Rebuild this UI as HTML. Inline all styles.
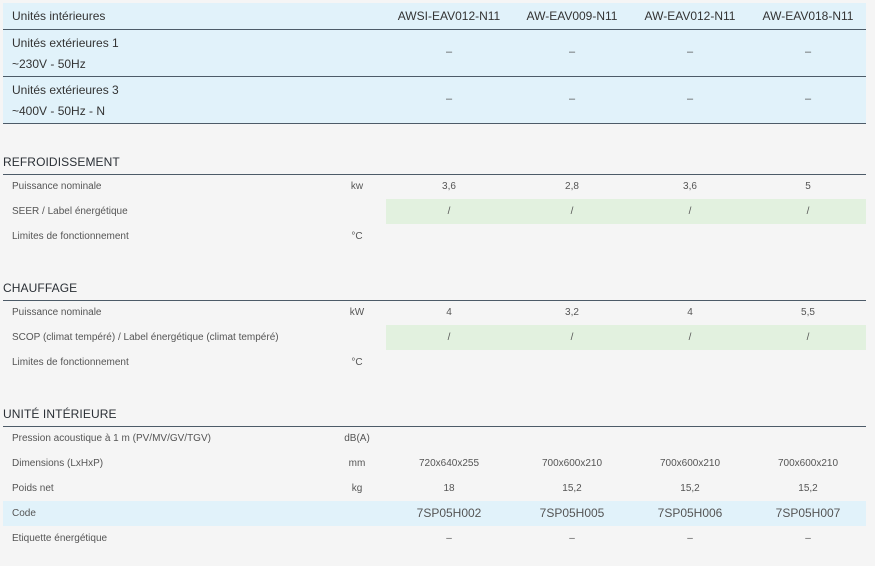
<!DOCTYPE html>
<html><head><meta charset="utf-8"><style>
body{margin:0;width:875px;height:566px;background:#f5f5f5;font-family:"Liberation Sans",sans-serif;color:#555;position:relative;overflow:hidden}
div{position:absolute;box-sizing:border-box}
.r{left:3px;width:863px;height:25px;font-size:10px;line-height:25px}
.r span{position:absolute;top:0}
.l{left:9px}
.u{left:324px;width:60px;text-align:center}
.c1,.c2,.c3,.c4{width:120px;text-align:center}
.c1{left:386px}.c2{left:509px}.c3{left:627px}.c4{left:745px}
.blue{background:#e1f2fa}
.h{font-size:12px;color:#333;left:3px}
.sec{left:3px;font-size:12px;color:#2a2f35;letter-spacing:.1px}
.line{left:3px;width:863px;height:1px;background:#4d5b68}
.green{background:#e2f1df;left:386px;width:480px;height:25px}
</style></head><body>
<div class="blue" style="left:3px;top:3px;width:863px;height:120px"></div>
<div class="line" style="top:29px"></div>
<div class="line" style="top:76px"></div>
<div class="line" style="top:123px"></div>
<div class="r h" style="top:3px;line-height:26px;font-size:12px"><span class="l" style="color:#333">Unités intérieures</span><span class="c1">AWSI-EAV012-N11</span><span class="c2">AW-EAV009-N11</span><span class="c3">AW-EAV012-N11</span><span class="c4">AW-EAV018-N11</span></div>
<div style="left:12px;top:33px;font-size:12px;color:#333;line-height:21px">Unités extérieures 1<br>~230V - 50Hz</div>
<div class="r" style="top:40px;font-size:11px"><span class="c1">–</span><span class="c2">–</span><span class="c3">–</span><span class="c4">–</span></div>
<div style="left:12px;top:80px;font-size:12px;color:#333;line-height:21px">Unités extérieures 3<br>~400V - 50Hz - N</div>
<div class="r" style="top:87px;font-size:11px"><span class="c1">–</span><span class="c2">–</span><span class="c3">–</span><span class="c4">–</span></div>

<div class="sec" style="top:155px">REFROIDISSEMENT</div>
<div class="line" style="top:174px"></div>
<div class="green" style="top:199px"></div>
<div class="r" style="top:174px"><span class="l">Puissance nominale</span><span class="u">kw</span><span class="c1">3,6</span><span class="c2">2,8</span><span class="c3">3,6</span><span class="c4">5</span></div>
<div class="r" style="top:199px"><span class="l">SEER / Label énergétique</span><span class="c1">/</span><span class="c2">/</span><span class="c3">/</span><span class="c4">/</span></div>
<div class="r" style="top:224px"><span class="l">Limites de fonctionnement</span><span class="u">°C</span></div>

<div class="sec" style="top:281px">CHAUFFAGE</div>
<div class="line" style="top:300px"></div>
<div class="green" style="top:325px"></div>
<div class="r" style="top:300px"><span class="l">Puissance nominale</span><span class="u">kW</span><span class="c1">4</span><span class="c2">3,2</span><span class="c3">4</span><span class="c4">5,5</span></div>
<div class="r" style="top:325px"><span class="l">SCOP (climat tempéré) / Label énergétique (climat tempéré)</span><span class="c1">/</span><span class="c2">/</span><span class="c3">/</span><span class="c4">/</span></div>
<div class="r" style="top:350px"><span class="l">Limites de fonctionnement</span><span class="u">°C</span></div>

<div class="sec" style="top:407px">UNITÉ INTÉRIEURE</div>
<div class="line" style="top:426px"></div>
<div class="r" style="top:426px"><span class="l">Pression acoustique à 1 m (PV/MV/GV/TGV)</span><span class="u">dB(A)</span></div>
<div class="r" style="top:451px"><span class="l">Dimensions (LxHxP)</span><span class="u">mm</span><span class="c1">720x640x255</span><span class="c2">700x600x210</span><span class="c3">700x600x210</span><span class="c4">700x600x210</span></div>
<div class="r" style="top:476px"><span class="l">Poids net</span><span class="u">kg</span><span class="c1">18</span><span class="c2">15,2</span><span class="c3">15,2</span><span class="c4">15,2</span></div>
<div class="r blue" style="top:501px;height:25px"><span class="l">Code</span><span class="c1" style="font-size:12px">7SP05H002</span><span class="c2" style="font-size:12px">7SP05H005</span><span class="c3" style="font-size:12px">7SP05H006</span><span class="c4" style="font-size:12px">7SP05H007</span></div>
<div class="r" style="top:526px"><span class="l">Etiquette énergétique</span><span class="c1">–</span><span class="c2">–</span><span class="c3">–</span><span class="c4">–</span></div>
</body></html>
